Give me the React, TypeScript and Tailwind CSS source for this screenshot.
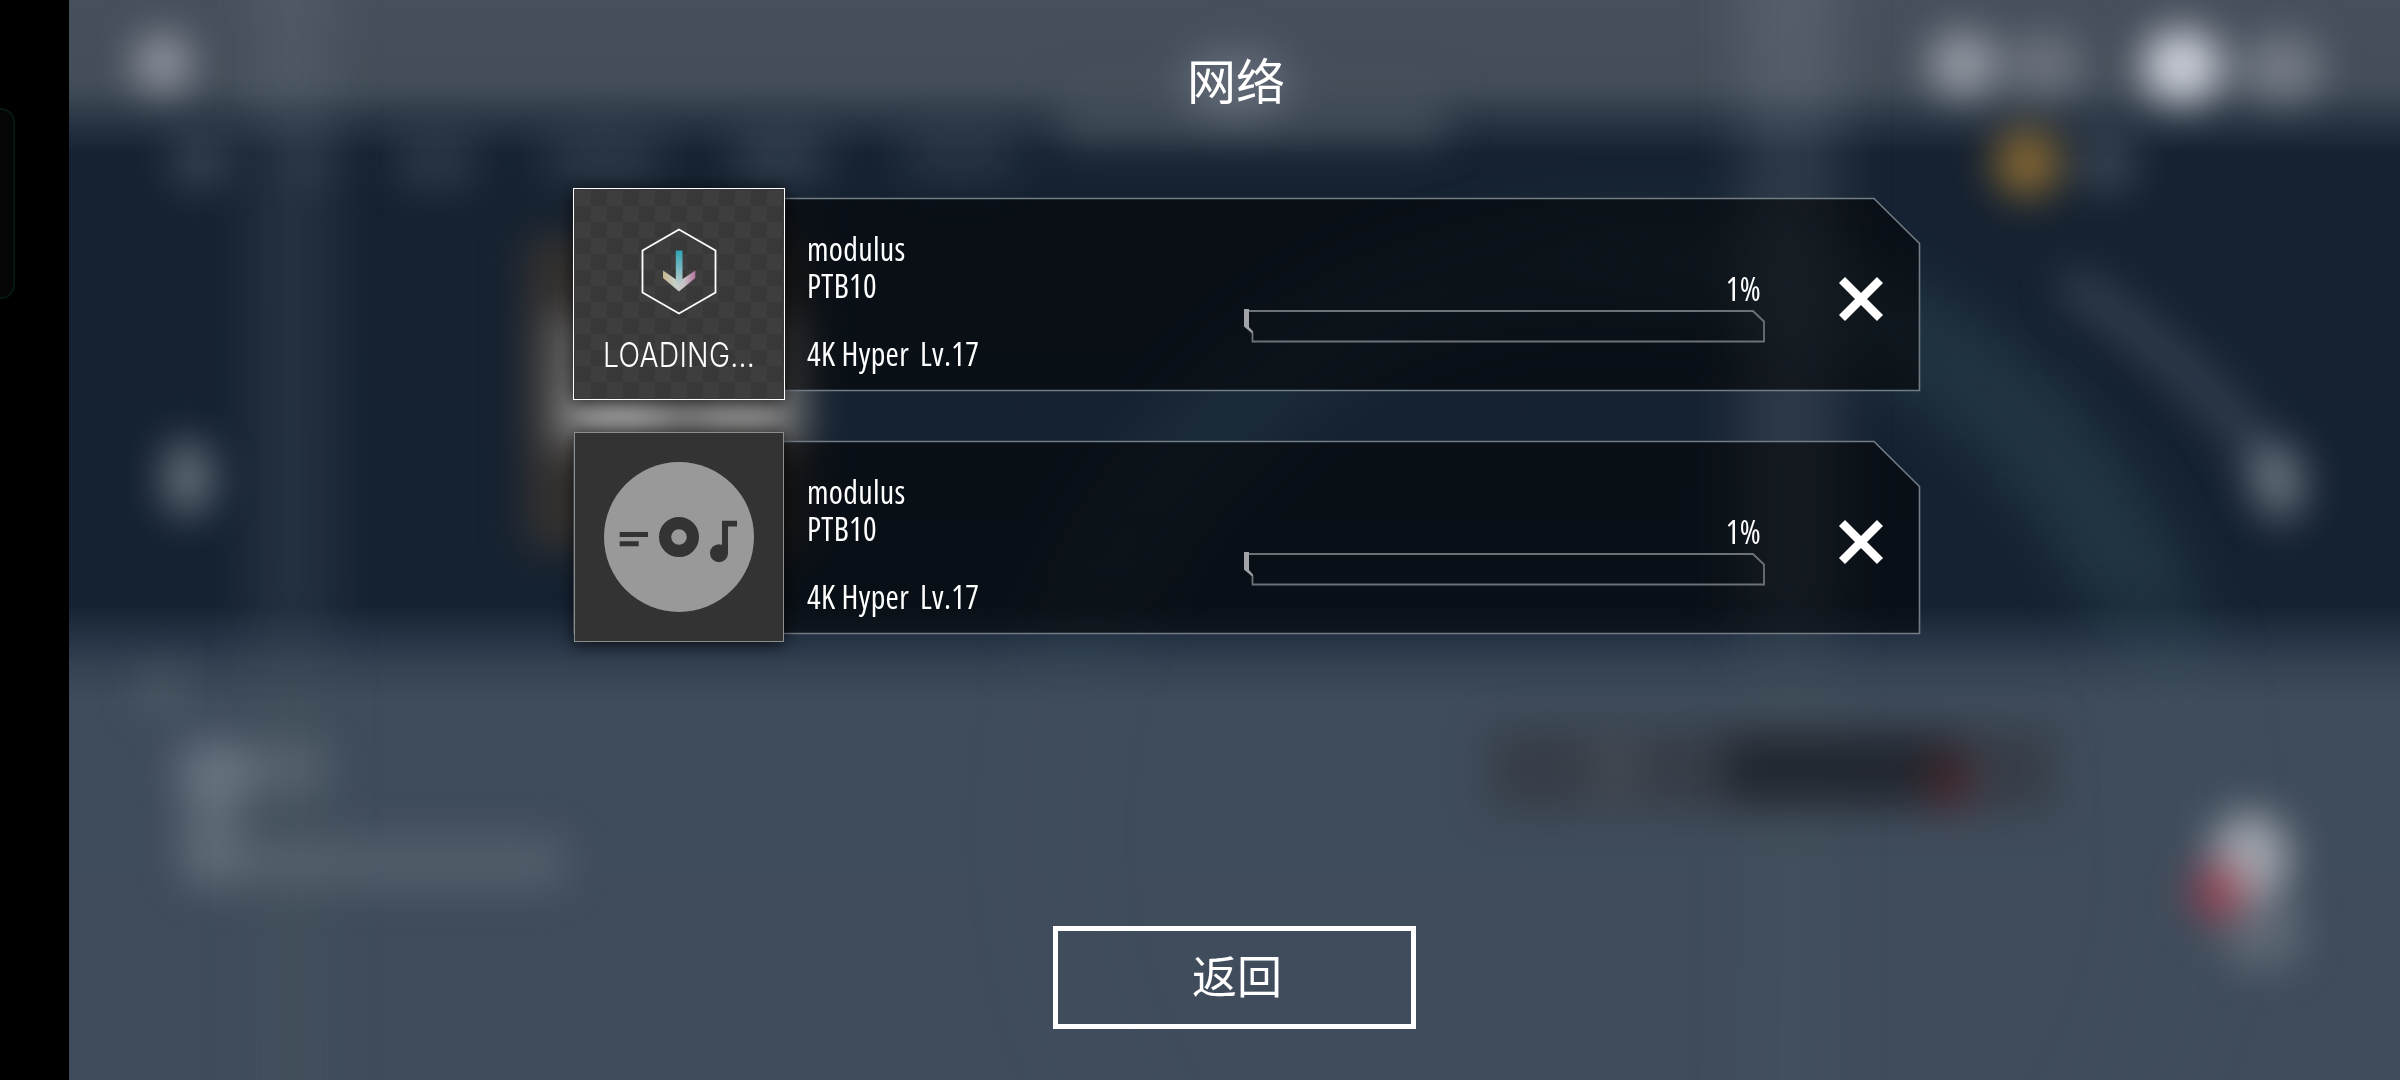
type Track = {
  title: string;
  artist: string;
  chart: string;
  level: string;
  progress: number;
  cover: "loading" | "disc";
};

const tracks: Track[] = [
  { title: "modulus", artist: "PTB10", chart: "4K Hyper", level: "Lv.17", progress: 1, cover: "loading" },
  { title: "modulus", artist: "PTB10", chart: "4K Hyper", level: "Lv.17", progress: 1, cover: "disc" },
];

// soft shapes behind the dialog: [cx, cy, rx, ry, color, opacity]
const blobs: [number, number, number, number, string, number][] = [
  [163, 63, 29, 29, "#b4b6c0", 0.75],
  [200, 162, 30, 26, "#8a97a5", 0.3],
  [313, 162, 28, 22, "#8a97a5", 0.12],
  [436, 162, 44, 26, "#8a97a5", 0.2],
  [604, 160, 64, 26, "#8a97a5", 0.2],
  [780, 158, 52, 26, "#8a97a5", 0.24],
  [960, 155, 64, 26, "#8a97a5", 0.16],
  [1236, 84, 54, 36, "#8d92a0", 0.42],
  [188, 478, 25, 38, "#a0aab2", 0.6],
  [2266, 472, 20, 28, "#a0aab2", 0.35],
  [2281, 484, 24, 38, "#a0aab2", 0.55],
  [1963, 64, 35, 33, "#b4b8c0", 0.75],
  [2045, 64, 38, 30, "#9a9ea8", 0.5],
  [2182, 66, 40, 37, "#e0e2ea", 0.9],
  [2282, 68, 42, 34, "#9a9ea8", 0.58],
  [2027, 163, 33, 34, "#a07832", 0.85],
  [2105, 163, 32, 28, "#8a97a4", 0.3],
  [163, 690, 26, 26, "#6f7a7a", 0.25],
  [215, 775, 38, 38, "#929aa6", 0.5],
  [285, 768, 46, 32, "#8a929c", 0.28],
  [212, 840, 32, 40, "#8a929c", 0.35],
  [2250, 858, 40, 46, "#c8cad0", 0.72],
  [2262, 932, 42, 38, "#8a929c", 0.42],
];

function Backdrop() {
  return (
    <svg className="absolute inset-0 h-full w-full" viewBox="69 0 2331 1080" preserveAspectRatio="none">
      <defs>
        <linearGradient id="base" x1="0" y1="0" x2="0" y2="1">
          <stop offset="0" stopColor="#464f5c" />
          <stop offset="0.07" stopColor="#444e5a" />
          <stop offset="0.085" stopColor="#3f4a56" />
          <stop offset="0.115" stopColor="#273342" />
          <stop offset="0.142" stopColor="#162231" />
          <stop offset="0.56" stopColor="#152231" />
          <stop offset="0.59" stopColor="#253344" />
          <stop offset="0.615" stopColor="#344151" />
          <stop offset="0.65" stopColor="#3f4c5b" />
          <stop offset="1" stopColor="#404c5b" />
        </linearGradient>
        <linearGradient id="ring" gradientUnits="userSpaceOnUse" x1="1000" y1="800" x2="2050" y2="400">
          <stop offset="0" stopColor="#5d8078" stopOpacity="0.1" />
          <stop offset="0.6" stopColor="#3c6670" stopOpacity="0.12" />
          <stop offset="1" stopColor="#3f6268" stopOpacity="0.3" />
        </linearGradient>
        <linearGradient id="fade" gradientUnits="userSpaceOnUse" x1="0" y1="560" x2="0" y2="700">
          <stop offset="0" stopColor="#fff" />
          <stop offset="1" stopColor="#333" />
        </linearGradient>
        <mask id="ringMask" maskUnits="userSpaceOnUse" x="69" y="0" width="2331" height="1080">
          <rect x="69" width="2331" height="1080" fill="url(#fade)" />
        </mask>
        <filter id="soft" x="-100" y="-200" width="2700" height="1500" filterUnits="userSpaceOnUse" colorInterpolationFilters="sRGB">
          <feGaussianBlur stdDeviation="20" />
        </filter>
        <filter id="softer" x="-100" y="-200" width="2700" height="1500" filterUnits="userSpaceOnUse" colorInterpolationFilters="sRGB">
          <feGaussianBlur stdDeviation="26" />
        </filter>
      </defs>
      <rect x="69" width="2331" height="1080" fill="url(#base)" />
      <g filter="url(#softer)">
        <rect x="252" y="-180" width="80" height="810" fill="#9aa6b2" opacity="0.12" />
        <rect x="252" y="630" width="80" height="620" fill="#5a7060" opacity="0.09" />
        <rect x="1740" y="-180" width="100" height="810" fill="#9aa3b0" opacity="0.18" />
        <rect x="1740" y="630" width="100" height="620" fill="#5a7060" opacity="0.08" />
      </g>
      <g mask="url(#ringMask)">
        <circle cx="1620" cy="830" r="570" fill="none" stroke="url(#ring)" strokeWidth="105" filter="url(#softer)" />
      </g>
      <g filter="url(#soft)">
        <rect x="1060" y="90" width="385" height="54" fill="#4b5661" opacity="0.7" />
        <path d="M2065 280Q2180 350 2268 460" fill="none" stroke="#5a6376" strokeWidth="38" opacity="0.42" />
        <rect x="525" y="235" width="278" height="315" fill="#37332f" opacity="0.95" />
        <rect x="550" y="315" width="256" height="132" fill="#686868" />
        <rect x="572" y="394" width="95" height="44" fill="#b5b5b5" opacity="0.75" />
        <rect x="695" y="394" width="92" height="44" fill="#a5a5a5" opacity="0.65" />
        <rect x="185" y="838" width="380" height="50" fill="#8a919c" opacity="0.26" />
        <rect x="1490" y="728" width="565" height="82" fill="#2f3236" opacity="0.55" />
        <rect x="1590" y="735" width="50" height="66" fill="#5a5f64" opacity="0.35" />
        <rect x="1725" y="734" width="235" height="70" fill="#171c24" opacity="0.65" />
        <rect x="1928" y="755" width="44" height="54" fill="#5e2024" opacity="0.5" />
        {blobs.map(([cx, cy, rx, ry, color, opacity], i) => (
          <ellipse key={i} cx={cx} cy={cy} rx={rx} ry={ry} fill={color} opacity={opacity} />
        ))}
        <ellipse cx="2218" cy="892" rx="27" ry="30" fill="#a83848" opacity="0.75" />
      </g>
    </svg>
  );
}

function LoadingCover() {
  return (
    <div className="relative z-10 h-[212px] w-[212px] shrink-0 border border-white bg-[#3e3e3e] shadow-[0_2px_16px_rgba(0,0,0,0.75)]">
      <svg className="h-full w-full overflow-visible" viewBox="-1 -1 210 210">
        <defs>
          <pattern id="checks" width="32" height="32" patternUnits="userSpaceOnUse">
            <rect width="16" height="16" x="16" fill="#383838" />
            <rect width="16" height="16" y="16" fill="#383838" />
          </pattern>
          <linearGradient id="stem" x1="0" y1="0" x2="0" y2="1">
            <stop offset="0" stopColor="#2fa3b5" />
            <stop offset="0.55" stopColor="#7fbcc4" />
            <stop offset="1" stopColor="#c9ccca" />
          </linearGradient>
          <linearGradient id="head" x1="0" y1="0" x2="1" y2="0">
            <stop offset="0" stopColor="#c9b68e" />
            <stop offset="0.4" stopColor="#c6cfcb" />
            <stop offset="0.65" stopColor="#c8c4c8" />
            <stop offset="1" stopColor="#b4749c" />
          </linearGradient>
        </defs>
        <rect x="-1" y="-1" width="210" height="210" fill="url(#checks)" />
        <path d="M104 39.500L140.500 60.500V102.500L104 123.500L67.500 102.500V60.500Z" fill="none" stroke="#fff" strokeWidth="1.800" />
        <path d="M88 80.500L104 91.500L120.300 80.500V88L104 101.500L88 88Z" fill="url(#head)" />
        <path d="M100.800 60.500H107.500V92L104 96L100.800 92Z" fill="url(#stem)" />
        <text
          x="28"
          y="177"
          textLength="152"
          lengthAdjust="spacingAndGlyphs"
          className="fill-white font-['Inter',sans-serif] text-[34.5px] font-light"
        >
          LOADING...
        </text>
      </svg>
    </div>
  );
}

function DiscCover() {
  return (
    <div className="relative z-10 m-px h-[210px] w-[210px] shrink-0 border border-[#8b8e90] bg-[#333] shadow-[0_2px_16px_rgba(0,0,0,0.75)]">
      <svg className="h-full w-full" viewBox="0 0 208 208">
        <circle cx="104" cy="104" r="75" fill="#999" />
        <g fill="#333">
          <path d="M44.700 99H73V104H44.700ZM44.700 108.200H63.700V113.200H44.700Z" />
          <path d="M147 87.800H162V93.500H153V120.500H147Z" />
          <circle cx="144" cy="120.200" r="9" />
        </g>
        <circle cx="104" cy="104" r="13.900" fill="none" stroke="#333" strokeWidth="12.200" />
      </svg>
    </div>
  );
}

function ProgressBar({ value }: { value: number }) {
  return (
    <div className="flex w-[521px] flex-col">
      <span className="pr-[4px] text-right leading-[38px]">{value}%</span>
      <svg className="h-[35px] w-[521px]" viewBox="0 0 521 35">
        <path d="M1 3H509L520 13.500V33.500H8.500V25L1 18Z" fill="none" stroke="#6d7178" strokeWidth="1.800" />
        <path d="M0 1H5V19L9 23.500V25L0 18.500Z" fill="#a0a3a8" />
      </svg>
    </div>
  );
}

function TrackRow({ track }: { track: Track }) {
  return (
    <div className="relative flex h-[212px] w-[1348px] items-center text-[32px] tracking-[0.3px] text-white">
      <svg className="absolute inset-0 h-full w-full" viewBox="0 0 1348 212">
        <path d="M1 10.500H1301L1346.500 55.500V202.500H1Z" fill="#000" fillOpacity="0.54" stroke="#727c84" strokeWidth="1.600" />
      </svg>
      {track.cover === "loading" ? <LoadingCover /> : <DiscCover />}
      <div className="relative flex h-full w-[459px] flex-col pt-[42px] pl-[22px] leading-[37px]">
        <span>{track.title}</span>
        <span>{track.artist}</span>
        <span className="mt-[31px] flex gap-[11px]">
          <span>{track.chart}</span>
          <span>{track.level}</span>
        </span>
      </div>
      <div className="relative pt-[25px]">
        <ProgressBar value={track.progress} />
      </div>
      <button className="relative ml-[73px] pt-[9px]">
        <svg className="h-[46px] w-[46px]" viewBox="0 0 46 46">
          <path d="M4 4L42 42M42 4L4 42" stroke="#fff" strokeWidth="8.500" />
        </svg>
      </button>
    </div>
  );
}

export default function App() {
  return (
    <div className="flex h-[1080px] w-[2400px] overflow-hidden bg-black font-['Open_Sans','Noto_Sans_CJK_SC',sans-serif] font-stretch-condensed">
      <div className="w-[69px] shrink-0 pt-[108px]">
        <div className="h-[191px] w-[15px] rounded-r-[14px] border-2 border-l-0 border-[#04180f] bg-[#050506]" />
      </div>
      <main className="relative flex flex-1 flex-col items-center">
        <Backdrop />
        <h1 className="relative mt-[45px] pl-[3px] text-[49px] leading-[72px] text-white">网络</h1>
        <div className="relative mt-[71px] flex flex-col gap-[31px] self-start pl-[504px]">
          {tracks.map((track, i) => (
            <TrackRow key={i} track={track} />
          ))}
        </div>
        <button className="relative mt-[283px] h-[103px] w-[363px] border-5 border-white pb-[2px] pl-[5px] text-[45px] text-white">
          返回
        </button>
      </main>
    </div>
  );
}
